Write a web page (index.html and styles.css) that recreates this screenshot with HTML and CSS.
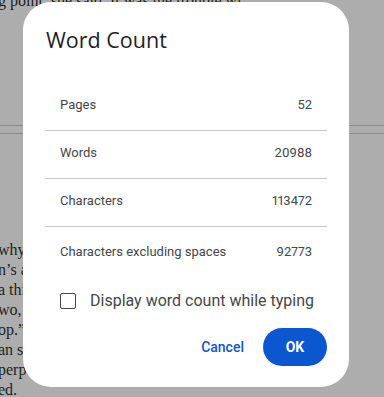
FILE: index.html
```html
<!DOCTYPE html>
<html lang="en">
<head>
    <meta charset="UTF-8">
    <title>Word Count</title>
    <link rel="stylesheet" href="styles.css">
</head>
<body>
    <div class="doc">
        <div class="doc-line doc-first">g point, she said. It was the trouble wi</div>
        <div class="page-break"></div>
        <div class="doc-body">
            <div class="doc-line">why anyone would stay so late in the evening</div>
            <div class="doc-line">n’s afraid of the dark, he thought, and turned</div>
            <div class="doc-line">a thin sliver of light under the door of the</div>
            <div class="doc-line">wo, three. He counted the steps out loud.</div>
            <div class="doc-line">op.” The voice was quiet but firm.</div>
            <div class="doc-line">an said nothing, and the silence grew heavy</div>
            <div class="doc-line">perplexed, she looked back toward the hall</div>
            <div class="doc-line">ed.</div>
        </div>
    </div>

    <div class="dialog" role="dialog" aria-label="Word Count">
        <h2 class="dialog-title">Word Count</h2>

        <div class="stats">
            <div class="stat-row">
                <span>Pages</span>
                <span class="num">52</span>
            </div>
            <div class="stat-row">
                <span>Words</span>
                <span class="num">20988</span>
            </div>
            <div class="stat-row">
                <span>Characters</span>
                <span class="num">113472</span>
            </div>
            <div class="stat-row last">
                <span>Characters excluding spaces</span>
                <span class="num">92773</span>
            </div>
        </div>

        <label class="check-row">
            <span class="checkbox"></span>
            <span>Display word count while typing</span>
        </label>

        <div class="actions">
            <button class="btn-text">Cancel</button>
            <button class="btn-primary">OK</button>
        </div>
    </div>
</body>
</html>
```

FILE: styles.css
```css
body {
    margin: 0;
    background: #adadad;
    overflow: hidden;
    height: 397px;
}

.doc {
    font-family: "Liberation Serif", "DejaVu Serif", serif;
    font-size: 16px;
    color: #1e1e1e;
}

.doc-line {
    line-height: 20px;
    white-space: nowrap;
    margin-left: -2px;
}

.doc-first {
    margin-top: -9px;
}

.page-break {
    margin-top: 114px;
    height: 7px;
    border-top: 1px solid #8c8c8c;
    border-bottom: 1px solid #8c8c8c;
}

.doc-body {
    margin-top: 106px;
}

.dialog {
    position: absolute;
    left: 23px;
    top: 2px;
    width: 326px;
    height: 385px;
    box-sizing: border-box;
    background: #fff;
    border-radius: 28px;
    padding: 0 22px;
    font-family: Roboto, "Noto Sans", sans-serif;
    color: #444746;
}

.dialog-title {
    margin: 0;
    padding: 23px 0 0 1px;
    font-family: "Open Sans", Roboto, sans-serif;
    font-size: 21.5px;
    font-weight: 400;
    line-height: 30px;
    color: #1f1f1f;
    height: 58px;
    box-sizing: border-box;
}

.stats {
    margin-top: 23px;
}

.stat-row {
    display: flex;
    justify-content: space-between;
    padding: 14px 15px 17px;
    font-size: 13px;
    line-height: 16px;
    border-bottom: 1px solid #c7c7c7;
}

.stat-row.last {
    border-bottom: none;
    padding-top: 17px;
    padding-bottom: 14px;
}

.num {
    font-variant-numeric: proportional-nums;
}

.check-row {
    display: flex;
    align-items: center;
    gap: 14px;
    margin-top: 17px;
    padding-left: 15px;
    font-size: 16px;
    line-height: 20px;
}

.checkbox {
    width: 16px;
    height: 16px;
    box-sizing: border-box;
    border: 1.5px solid #444746;
    border-radius: 2px;
}

.actions {
    display: flex;
    justify-content: flex-end;
    align-items: center;
    gap: 19px;
    margin-top: 17px;
}

.btn-text {
    background: none;
    border: none;
    padding: 0;
    font-family: Roboto, sans-serif;
    font-size: 14px;
    font-weight: 500;
    color: #0b57d0;
}

.btn-primary {
    width: 64px;
    height: 38px;
    border: none;
    border-radius: 19px;
    background: #0b57d0;
    color: #fff;
    font-family: Roboto, sans-serif;
    font-size: 14px;
    font-weight: 700;
}
```
